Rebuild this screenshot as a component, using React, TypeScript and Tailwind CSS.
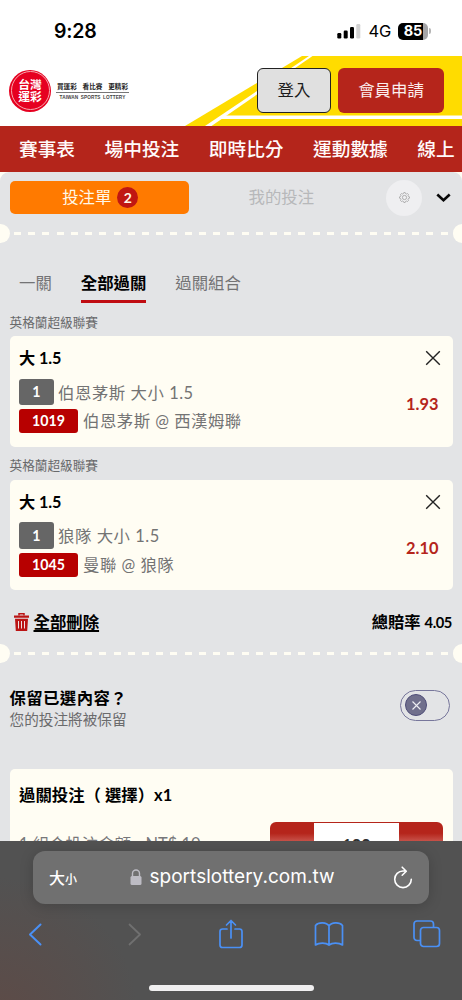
import React from "react";

type Bet = { id: string; market: string; match: string; code: string; odds: string };

const BETS: Bet[] = [
  { id: "a", market: "伯恩茅斯 大小 1.5", match: "伯恩茅斯 @ 西漢姆聯", code: "1019", odds: "1.93" },
  { id: "b", market: "狼隊 大小 1.5", match: "曼聯 @ 狼隊", code: "1045", odds: "2.10" },
];

function StatusBar() {
  return (
    <div className="flex h-[55.5px] shrink-0 items-start justify-between bg-white pt-[18px] pr-[31px] pl-[54px] font-['Inter','Liberation_Sans',sans-serif] text-black">
      <span className="text-[19.5px] leading-[26px] font-semibold tracking-[-0.2px]">9:28</span>
      <div className="flex h-[26px] items-center">
        <svg className="mr-[7px]" width="24" height="16" viewBox="0 0 24 16">
          <rect x="0.3" y="10" width="4" height="5.5" rx="1.2" />
          <rect x="6.7" y="7.5" width="4" height="8" rx="1.2" />
          <rect x="13" y="4" width="4" height="11.5" rx="1.2" />
          <rect x="19.3" y="1" width="4" height="14.5" rx="1.2" fill="#d2d2d2" />
        </svg>
        <span className="mr-[7px] text-[16.5px] leading-[26px] tracking-[-0.2px]">4G</span>
        <div className="flex h-[17px] w-[30px] items-center justify-center rounded-[5px] bg-[linear-gradient(90deg,#000_84%,#a5a5a7_84%)] text-[14.5px] leading-none font-bold text-white">85</div>
        <div className="ml-px h-[6px] w-[2px] rounded-r-full bg-[#b5b5b5]" />
      </div>
    </div>
  );
}

function Header() {
  return (
    <header className="relative flex h-[70px] shrink-0 items-center bg-white pl-[9px]">
      <svg className="absolute top-0 right-0" width="282" height="70" viewBox="180 55.5 282 70">
        <path d="M302 55.5H462V125.5H185Z" fill="#ffdc00" />
        <path d="M205 125.5 309 55.5H312.5L211.5 125.5Z" fill="#fff" />
        <path d="M223 115H462V118.4H218Z" fill="#fff" />
      </svg>
      <div className="relative flex size-[42px] items-center justify-center rounded-full bg-[#e60020]">
        <div className="absolute inset-[1.5px] rounded-full border border-[#f6a9ae]" />
        <div className="flex flex-col text-[11.8px] leading-[12px] font-bold text-white">
          <span>台灣</span>
          <span>運彩</span>
        </div>
      </div>
      <div className="relative ml-[5px] flex w-[73px] flex-col items-center">
        <div className="flex w-full justify-between px-[1px] text-[6.6px] leading-[10px] font-bold text-[#222]">
          <span>買運彩</span>
          <span>看比賽</span>
          <span>更精彩</span>
        </div>
        <div className="mt-[1px] h-px w-full bg-[#777]" />
        <span className="mt-[1px] font-['Liberation_Sans',sans-serif] text-[4.7px] leading-[7px] font-bold tracking-[0.1px] whitespace-nowrap text-[#444] [word-spacing:1px]">TAIWAN SPORTS LOTTERY</span>
      </div>
      <div className="relative ml-auto flex gap-[7px] pr-[18px]">
        <button className="h-[45px] w-[74px] rounded-[6px] border border-[#222] bg-[#e0e0e0] text-[16.4px] text-[#1b1b1b]">登入</button>
        <button className="h-[45px] w-[106px] rounded-[6px] bg-[#b5251b] text-[16.4px] text-[#fbeeee]">會員申請</button>
      </div>
    </header>
  );
}

function Nav() {
  return (
    <nav className="flex h-[46px] shrink-0 items-center gap-[29.5px] overflow-hidden bg-[#b4251b] pl-[19px] text-[18.7px] leading-[46px] font-medium whitespace-nowrap text-[#fffafa]">
      <span>賽事表</span>
      <span>場中投注</span>
      <span>即時比分</span>
      <span>運動數據</span>
      <span>線上</span>
    </nav>
  );
}

function Perforation() {
  return (
    <div className="flex h-[19px] items-center justify-between">
      <div className="h-[19px] w-[9.5px] rounded-r-full bg-[#fffdf3]" />
      <div className="h-[3px] w-[434px] bg-[repeating-linear-gradient(90deg,#fffdf3_0px,#fffdf3_7px,transparent_7px,transparent_14.22px)]" />
      <div className="h-[19px] w-[9.5px] rounded-l-full bg-[#fffdf3]" />
    </div>
  );
}

function SlipTabs() {
  return (
    <div className="flex h-[52px] items-center pl-[9.5px]">
      <button className="flex h-[33px] w-[179.5px] items-center justify-center gap-[6px] rounded-[5px] bg-[#ff7a00] pl-[2px] text-[16.4px] text-[#fff8e8]">
        投注單
        <span className="flex size-[21px] items-center justify-center rounded-full bg-[#c01712] text-[14px] leading-none font-bold">2</span>
      </button>
      <span className="ml-[59.5px] text-[16.4px] text-[#b7b8ba]">我的投注</span>
      <div className="ml-[72px] flex size-[36px] items-center justify-center rounded-full bg-[#efeff1]">
        <svg width="11" height="11" viewBox="0 0 24 24" fill="none" stroke="#a2a2a2" strokeWidth="1.8">
          <path d="M9.7 3.5 10.5 1.3h3l.8 2.2 2.1.9 2.200-1 2.100 2.100-1 2.200.9 2 2.200.8v3l-2.200.8-.9 2.100 1 2.200-2.100 2.100-2.200-1-2.100.9-.8 2.200h-3l-.8-2.200-2.100-.9-2.200 1-2.100-2.100 1-2.200-.9-2.100-2.200-.8v-3l2.200-.8.9-2-1-2.200 2.100-2.100 2.200 1Z" />
          <circle cx="12" cy="12" r="4.6" />
        </svg>
      </div>
      <svg className="ml-[13.5px]" width="15" height="10" viewBox="0 0 15 10" fill="none" stroke="#080808" strokeWidth="2.6">
        <path d="m1.3 1.500 6.200 5.800 6.200-5.800" />
      </svg>
    </div>
  );
}

function BetCard({ bet }: { bet: Bet }) {
  return (
    <section className="mx-[9.5px] h-[143.7px]">
      <div className="h-[27.5px] text-[12.65px] leading-[27px] text-[#68696b]">英格蘭超級聯賽</div>
      <div className="flex h-[110.5px] justify-between rounded-[5px] bg-[#fffdf3] pt-[10px] pr-[14px] pl-[9.5px]">
        <div className="flex flex-col items-start">
          <div className="h-[24px] text-[16.2px] leading-[23px] font-bold tracking-[-0.1px] text-black">大 1.5</div>
          <div className="mt-[8.5px] flex items-center">
            <span className="flex h-[26.5px] w-[34.5px] items-center justify-center rounded-[3px] bg-[#666] text-[14.2px] font-bold text-white">1</span>
            <span className="mt-px ml-[4.5px] text-[16.4px] leading-[26px] tracking-[0.55px] text-[#737373]">{bet.market}</span>
          </div>
          <div className="mt-[3.5px] flex items-center">
            <span className="flex h-[24px] w-[59px] items-center justify-center rounded-[3px] bg-[#b70000] text-[14.2px] font-bold text-white">{bet.code}</span>
            <span className="ml-[5px] text-[16.4px] leading-[24px] tracking-[0.5px] text-[#737373]">{bet.match}</span>
          </div>
        </div>
        <div className="flex flex-col items-end">
          <svg className="mt-[4px] mr-[-2px]" width="16" height="16" viewBox="0 0 16 16" fill="none" stroke="#222" strokeWidth="1.4">
            <path d="m1.2 1.200 13.600 13.600M14.800 1.200 1.200 14.800" />
          </svg>
          <span className="mt-[26px] text-[16.4px] leading-[24px] font-bold text-[#b5251b]">{bet.odds}</span>
        </div>
      </div>
    </section>
  );
}

function Slip() {
  return (
    <main className="flex min-h-0 flex-1 flex-col overflow-hidden bg-[#fffdf3]">
      <div className="flex-1 rounded-t-[9px] bg-[#e3e4e6]">
        <SlipTabs />
        <Perforation />
        <div className="mt-[21px] flex h-[39px] gap-[29px] pl-[19px] text-[16.4px] leading-[38px] text-[#737375]">
          <span>一關</span>
          <span className="border-b-[3px] border-[#c00c12] font-bold text-black">全部過關</span>
          <span>過關組合</span>
        </div>
        <div className="mt-[6px]">
          {BETS.map((bet) => (
            <BetCard key={bet.id} bet={bet} />
          ))}
        </div>
        <div className="mt-[-4px] flex h-[60px] items-center pr-[10px] pl-[14px] text-black">
          <svg className="mt-[1px]" width="15" height="18" viewBox="0 0 15 18">
            <path d="M5 2.500V.8h5v1.700" fill="none" stroke="#bb1414" strokeWidth="1.5" />
            <path d="M0 2.500h15v2.300H0ZM1 5.800h13L13.200 18H1.800Z" fill="#bb1414" />
            <path d="M4.500 8v7.500M7.500 8v7.500M10.500 8v7.500" stroke="#eee2e3" strokeWidth="1" />
          </svg>
          <span className="ml-[4.5px] text-[16.4px] font-bold underline decoration-[1.5px] underline-offset-[2px]">全部刪除</span>
          <span className="ml-auto flex items-baseline gap-[4px] font-bold">
            <span className="text-[16.3px]">總賠率</span>
            <span className="text-[14.7px] tracking-[-0.4px]">4.05</span>
          </span>
        </div>
        <div className="mt-[-7.5px]">
          <Perforation />
        </div>
        <div className="mt-[18.5px] flex h-[54px] items-center justify-between pr-[12px] pl-[9.5px]">
          <div className="flex flex-col">
            <span className="text-[16.4px] leading-[23px] font-bold tracking-[0.4px] text-black">保留已選內容？</span>
            <span className="text-[14.65px] leading-[22px] text-[#6b6b6d]">您的投注將被保留</span>
          </div>
          <div className="mt-[-7px] flex h-[31px] w-[50px] items-center rounded-full border border-[#77769b] pl-[4px]">
            <div className="flex size-[22px] items-center justify-center rounded-full border border-[#4f4d78] bg-[#706f8c]">
              <svg width="9" height="9" viewBox="0 0 9 9" stroke="#eeeef3" strokeWidth="1.1">
                <path d="m.5.5 8 8M8.5.5l-8 8" />
              </svg>
            </div>
          </div>
        </div>
        <div className="mx-[9.5px] mt-[33.5px] h-[100px] rounded-t-[5px] bg-[#fffdf3] px-[9.5px] pt-[14px]">
          <div className="text-[16.4px] leading-[24px] font-bold whitespace-pre text-black">過關投注（ 選擇）x1</div>
          <div className="mt-[15px] flex items-start justify-between">
            <span className="pt-[8px] text-[16.4px] leading-[28px] whitespace-pre text-[#77777a]">1 組合投注金額 - NT$ 10</span>
            <div className="flex h-[45px] w-[173px] justify-center rounded-[6px] bg-[linear-gradient(#b5251b_25%,#cf655d_50%)] pt-px">
              <span className="h-full w-[85.5px] bg-white pt-[11px] text-center text-[16.4px] leading-[22px] font-bold text-[#333]">100</span>
            </div>
          </div>
        </div>
      </div>
    </main>
  );
}

function BrowserBar() {
  return (
    <footer className="flex h-[159px] shrink-0 flex-col bg-[#525252] bg-[radial-gradient(circle_at_0%_110%,#5d4b47_0%,transparent_28%)] px-[33px] pt-[10px]">
      <div className="flex h-[53px] items-center rounded-[12px] bg-[#707070] px-[16px] text-white shadow-[0_2px_14px_rgba(0,0,0,0.18)]">
        <div className="flex w-[80px] items-baseline font-medium">
          <span className="text-[16px]">大</span>
          <span className="text-[12px]">小</span>
        </div>
        <svg className="ml-[1px]" width="12" height="17" viewBox="0 0 12 17">
          <path d="M2.500 8V4.500a3.500 3.500 0 0 1 7 0V8" fill="none" stroke="#bdbcc4" strokeWidth="1.4" />
          <rect x="0.5" y="7" width="11" height="9" rx="1.5" fill="#bdbcc4" />
        </svg>
        <span className="ml-[7.5px] font-['Inter','Liberation_Sans',sans-serif] text-[19px] tracking-[0.02px]">sportslottery.com.tw</span>
        <svg className="ml-auto" width="20" height="24" viewBox="0 0 20 24" fill="none" stroke="#fff" strokeWidth="1.6" strokeLinecap="round" strokeLinejoin="round">
          <path d="M11.500 5H10a8.300 8.300 0 1 0 8.300 8.300M9.200 1.200 13.300 5.200 9.200 9.200" />
        </svg>
      </div>
      <div className="mx-[-47px] grid h-[60px] grid-cols-5 place-items-center text-[#4a90f5]">
        <svg width="14" height="23" viewBox="0 0 14 23" fill="none" stroke="currentColor" strokeWidth="2" strokeLinecap="round" strokeLinejoin="round">
          <path d="M12.500 1.500 2 11.500 12.500 21.500" />
        </svg>
        <svg className="ml-[3px]" width="14" height="23" viewBox="0 0 14 23" fill="none" stroke="#707070" strokeWidth="1.8" strokeLinecap="round" strokeLinejoin="round">
          <path d="M1.500 1.500 12 11.500 1.500 21.500" />
        </svg>
        <svg width="24" height="31" viewBox="0 0 24 31" fill="none" stroke="currentColor" strokeWidth="1.7" strokeLinecap="round" strokeLinejoin="round">
          <path d="M8 10H3.500Q1 10 1 12.500V26Q1 28.500 3.500 28.500H20.500Q23 28.500 23 26V12.500Q23 10 20.500 10H16M12 19V1.500M7.500 6 12 1.500 16.500 6" />
        </svg>
        <svg width="30" height="26" viewBox="0 0 30 26" fill="none" stroke="currentColor" strokeWidth="1.7" strokeLinejoin="round">
          <path d="M15 5C12.500 1 4.500 1 1.500 4.500V24C5 21.500 12 21.500 15 24ZM15 5C17.500 1 25.500 1 28.500 4.500V24C25 21.500 18 21.500 15 24Z" />
        </svg>
        <svg width="28" height="28" viewBox="0 0 28 28" fill="none" stroke="currentColor" strokeWidth="1.7">
          <rect x="7.5" y="7.5" width="19" height="19" rx="3" />
          <path d="M7.500 20.500H4a3 3 0 0 1-3-3V4a3 3 0 0 1 3-3h13.500a3 3 0 0 1 3 3v3.500" />
        </svg>
      </div>
      <div className="mx-auto mt-[21px] h-[6px] w-[165px] shrink-0 rounded-full bg-[#f0eff0]" />
    </footer>
  );
}

export default function App() {
  return (
    <div className="flex h-[1000px] w-[462px] flex-col overflow-hidden bg-white font-['Lato','Noto_Sans_CJK_TC',sans-serif]">
      <StatusBar />
      <Header />
      <Nav />
      <Slip />
      <BrowserBar />
    </div>
  );
}
